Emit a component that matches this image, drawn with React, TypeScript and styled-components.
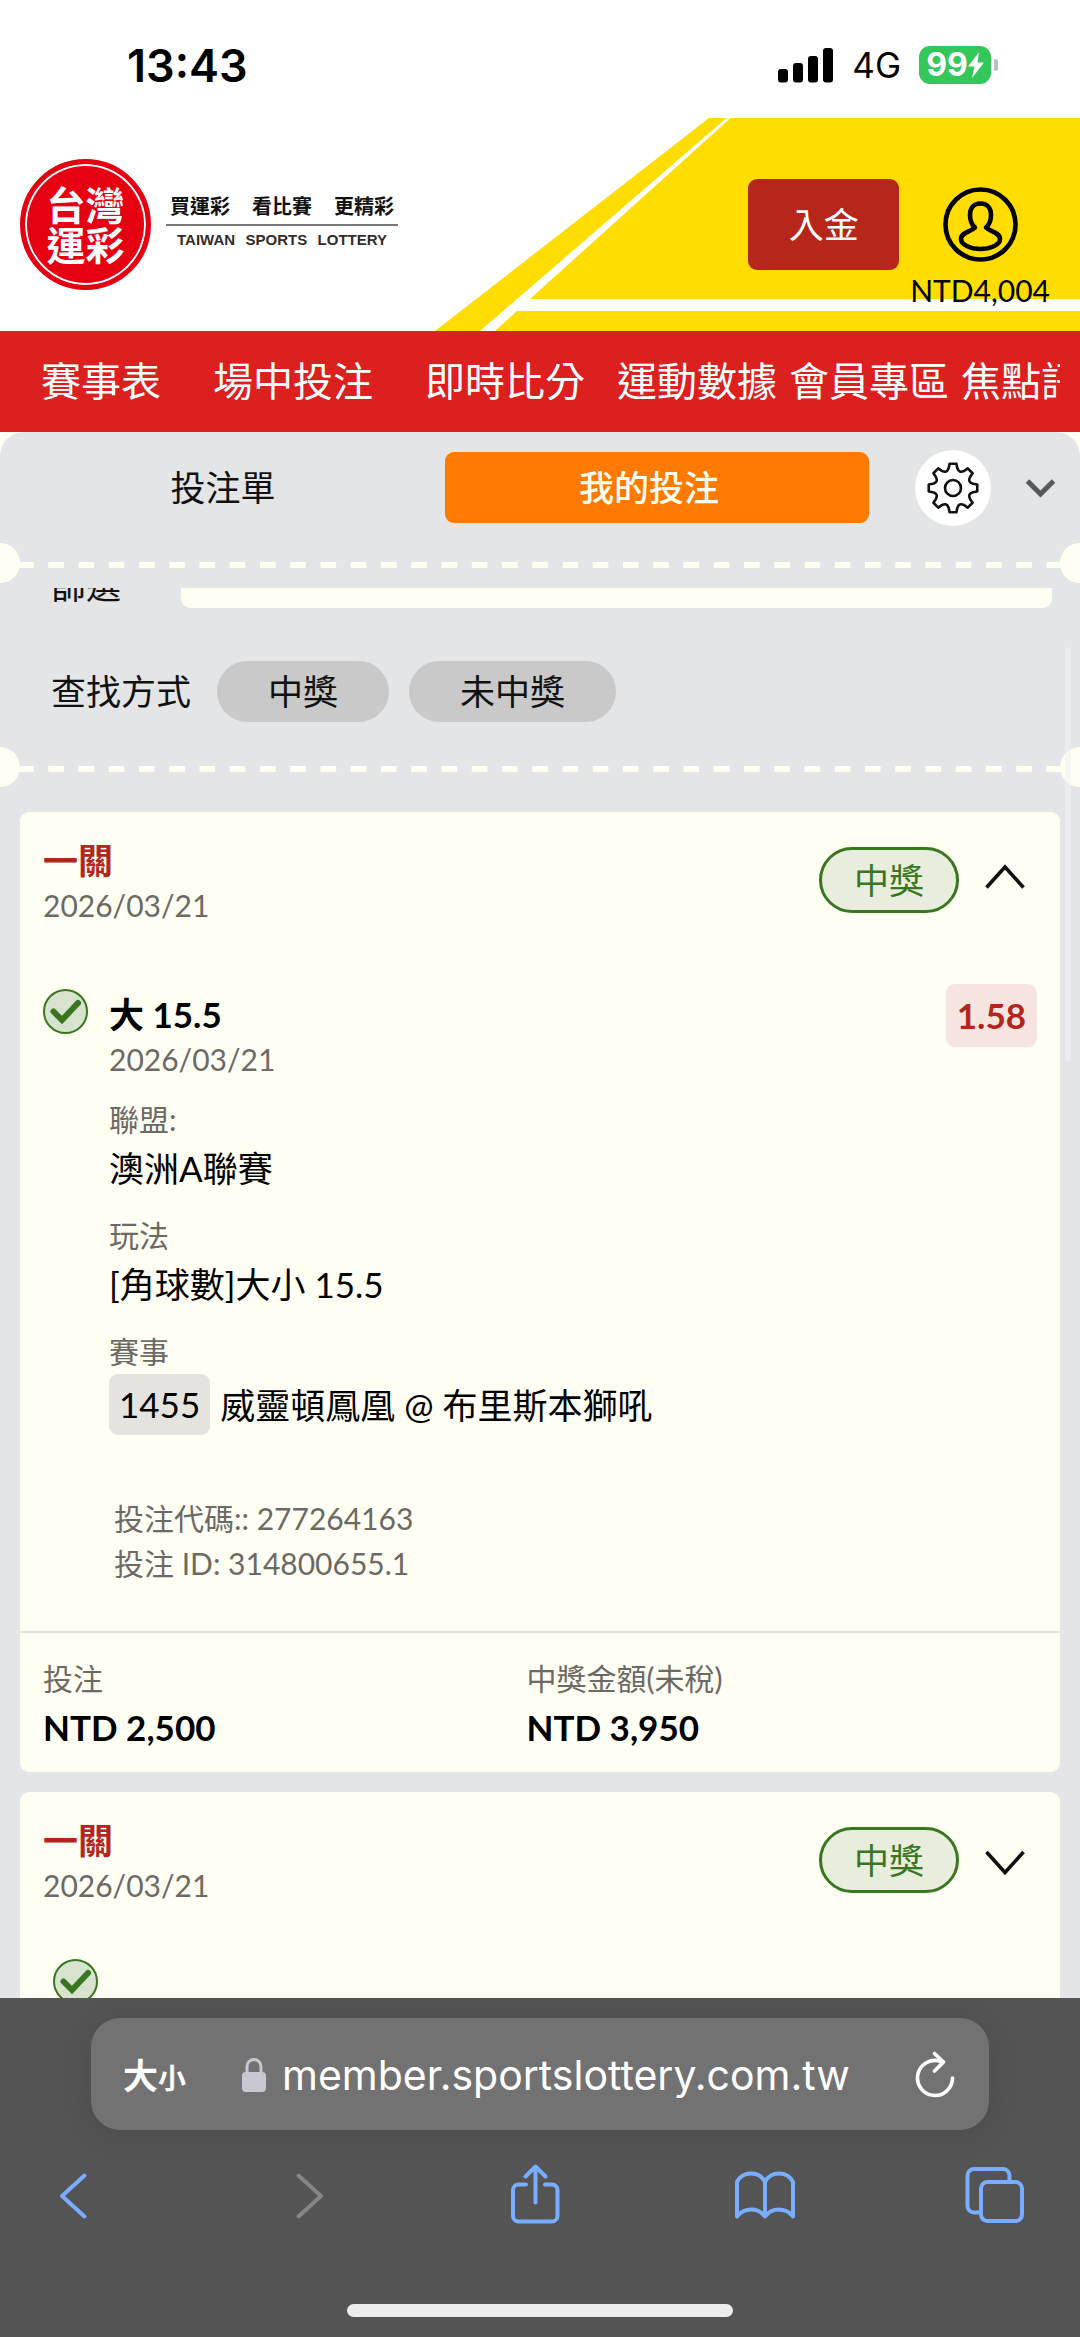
import React from "react";
import styled, { createGlobalStyle } from "styled-components";

const cream = "#fffef3";
const panel = "#e4e5e7";
const muted = "#6c6a65";
const red = "#b3261c";
const green = "#38771f";

const GlobalStyle = createGlobalStyle`
  *, *::before, *::after { box-sizing: border-box; }
  body { margin: 0; background: ${cream}; }
  button, input, select { font: inherit; color: inherit; margin: 0; padding: 0; border: 0; background: none; border-radius: 0; }
  h1, h2, p, dl, dd, dt, ul { margin: 0; padding: 0; font: inherit; list-style: none; }
  a { color: inherit; text-decoration: none; }
  svg { display: block; flex: none; }
`;

const Shell = styled.div`
  display: flex;
  flex-direction: column;
  height: 100vh;
  overflow: hidden;
  background: ${cream};
  color: #111;
  font-family: Lato, "Noto Sans CJK TC", sans-serif;
  font-size: 35px;
  line-height: 45px;
`;

/* ---------- status bar ---------- */
const StatusBar = styled.div`
  display: flex;
  align-items: center;
  justify-content: space-between;
  height: 118px;
  padding: 12px 82px 0 127px;
  flex: none;
  background: #fff;
  color: #000;
  font-family: Inter, sans-serif;
`;
const Clock = styled.time`
  font-size: 45px;
  font-weight: 600;
`;
const StatusRight = styled.div`
  display: flex;
  align-items: center;
`;
const Network = styled.span`
  margin: 0 18px;
  font-size: 35px;
  line-height: 38px;
`;
const Battery = styled.span`
  display: flex;
  align-items: center;
  justify-content: center;
  width: 72px;
  height: 38px;
  border-radius: 11px;
  background: #34c759;
  color: #fff;
  font-size: 32px;
  font-weight: 700;
  line-height: 38px;
`;

/* ---------- brand header ---------- */
const Header = styled.header`
  position: relative;
  display: flex;
  align-items: flex-start;
  justify-content: space-between;
  height: 213px;
  padding: 41px 30px 0 20px;
  flex: none;
  overflow: hidden;
  background: #fff;
`;
const Stripes = styled.svg`
  position: absolute;
  top: 0;
  right: 0;
`;
const Brand = styled.a`
  position: relative;
  display: flex;
  align-items: center;
  gap: 15px;
`;
const Seal = styled.h1`
  display: grid;
  place-content: center;
  width: 131px;
  height: 131px;
  border-radius: 50%;
  border: 5px solid #e50012;
  background: #e50012;
  box-shadow: inset 0 0 0 2px #fff;
  color: #fff;
  font-size: 39px;
  font-weight: 700;
  line-height: 40px;
  text-align: center;
`;
const Slogan = styled.div`
  width: 232px;
  padding-bottom: 8px;
  color: #111;
`;
const SloganRow = styled.p`
  display: flex;
  justify-content: space-between;
  padding: 0 4px 4px 4px;
  border-bottom: 2px solid #777;
  font-size: 20px;
  font-weight: 700;
  line-height: 28px;
`;
const SloganLatin = styled.p`
  display: flex;
  justify-content: space-between;
  padding: 4px 11px 0;
  color: #332c2b;
  font-family: "Liberation Sans", Arial, sans-serif;
  font-size: 15px;
  font-weight: 700;
  line-height: 20px;
`;
const Account = styled.div`
  position: relative;
  display: flex;
  align-items: flex-start;
`;
const Deposit = styled.button`
  width: 151px;
  height: 91px;
  margin-top: 20px;
  border-radius: 9px;
  background: #b7261b;
  color: #fff;
  font-size: 35px;
`;
const Profile = styled.button`
  display: flex;
  flex-direction: column;
  align-items: center;
  gap: 6px;
  margin-left: 11px;
  padding-top: 28px;
  color: #000;
  font-size: 30px;
  line-height: 45px;
`;

/* ---------- navigation ---------- */
const Nav = styled.nav`
  display: flex;
  height: 101px;
  padding: 0 20px 0 15px;
  flex: none;
  background: #dc1f1f;
`;
const NavList = styled.ul`
  display: flex;
  align-items: center;
  flex: 1;
  min-width: 0;
  overflow: hidden;
`;
const NavItem = styled.li<{ $wide?: boolean }>`
  padding: 0 ${(p) => (p.$wide ? 26 : 6)}px;
  color: #fff;
  font-size: 40px;
  white-space: nowrap;
`;

/* ---------- betting panel ---------- */
const Panel = styled.main`
  position: relative;
  display: flex;
  flex-direction: column;
  flex: 1;
  min-height: 0;
  border-radius: 24px 24px 0 0;
  background: ${panel};
`;
const PanelHead = styled.div`
  display: flex;
  align-items: center;
  height: 111px;
  padding: 0 24px 0 11px;
  flex: none;
`;
const Tabs = styled.div`
  display: grid;
  grid-template-columns: 1fr 1fr;
  gap: 10px;
  flex: 1;
`;
const Tab = styled.button<{ $active?: boolean }>`
  height: 71px;
  padding-right: ${(p) => (p.$active ? 16 : 0)}px;
  border-radius: 9px;
  background: ${(p) => (p.$active ? "#ff7a00" : "transparent")};
  color: ${(p) => (p.$active ? cream : "#111")};
  font-weight: ${(p) => (p.$active ? 500 : 400)};
`;
const RoundButton = styled.button`
  display: grid;
  place-items: center;
  width: 76px;
  height: 76px;
  margin: 0 34px 0 46px;
  border-radius: 50%;
  background: #fff;
`;
const IconButton = styled.button`
  display: grid;
  place-items: center;
`;
const Perforation = styled.div`
  display: flex;
  align-items: center;
  justify-content: space-between;
  height: 40px;
  flex: none;
  &::before, &::after {
    content: "";
    width: 20px;
    height: 40px;
    background: ${cream};
  }
  &::before { border-radius: 0 20px 20px 0; }
  &::after { border-radius: 20px 0 0 20px; }
`;
const Dashes = styled.span`
  flex: 1;
  height: 6px;
  margin: 4px -17px 0 -2px;
  background: linear-gradient(to right, ${cream} 50%, transparent 50%) 0 0 / 30px 6px round;
`;
const Viewport = styled.div`
  flex: 1;
  min-height: 0;
  margin-top: 5px;
  overflow: hidden;
`;
const ScrollThumb = styled.div`
  position: absolute;
  top: 215px;
  right: 9px;
  width: 6px;
  height: 415px;
  border-radius: 3px;
  background: rgba(240, 240, 246, 0.6);
`;
const FilterRow = styled.div`
  display: flex;
  align-items: center;
  height: 46px;
  margin-top: -26px;
  padding: 0 28px 0 51px;
`;
const FilterLabel = styled.label`
  width: 130px;
`;
const FilterSelect = styled.select`
  appearance: none;
  flex: 1;
  height: 46px;
  border-radius: 9px;
  background: ${cream};
`;
const SearchRow = styled.div`
  display: flex;
  align-items: center;
  gap: 20px;
  margin: 53px 0 25px;
  padding: 0 51px;
`;
const SearchLabel = styled.span`
  margin-right: 6px;
`;
const Pill = styled.button`
  height: 61px;
  padding: 0 51px;
  border-radius: 31px;
  background: #c9c9c9;
`;

/* ---------- bet cards ---------- */
const CardList = styled.div`
  display: flex;
  flex-direction: column;
  gap: 20px;
  padding: 25px 20px 0;
`;
const Card = styled.article`
  border-radius: 9px;
  background: ${cream};
`;
const CardHead = styled.div`
  display: flex;
  align-items: flex-start;
  justify-content: space-between;
  padding: 26px 35px 0 23px;
`;
const CardTitle = styled.h2`
  color: ${red};
  font-weight: 700;
`;
const Small = styled.p`
  color: ${muted};
  font-size: 30px;
`;
const CardActions = styled.div`
  display: flex;
  align-items: center;
  gap: 26px;
  padding-top: 9px;
`;
const Won = styled.span`
  height: 66px;
  padding: 0 32px;
  border: 3px solid ${green};
  border-radius: 33px;
  background: #e9eddd;
  color: ${green};
  line-height: 60px;
`;
const CardBody = styled.div`
  display: flex;
  align-items: flex-start;
  gap: 21px;
  padding: 56px 23px 45px;
`;
const CheckSlot = styled.div`
  padding-top: 5px;
`;
const Details = styled.div`
  flex: 1;
  padding-top: 8px;
`;
const Pick = styled.p`
  color: #000;
  font-weight: 700;
`;
const Fields = styled.dl`
  display: flex;
  flex-direction: column;
  gap: 19px;
  padding-top: 15px;
`;
const FieldLabel = styled.dt`
  color: ${muted};
  font-size: 30px;
`;
const FieldValue = styled.dd<{ $bold?: boolean }>`
  display: flex;
  align-items: center;
  gap: 10px;
  color: #000;
  font-weight: ${(p) => (p.$bold ? 700 : 400)};
  line-height: 52px;
`;
const MatchNo = styled.span`
  height: 61px;
  padding: 0 10px;
  border-radius: 9px;
  background: #e5e3de;
  line-height: 61px;
`;
const Codes = styled.div`
  padding: 61px 0 0 5px;
`;
const Odds = styled.span`
  height: 63px;
  padding: 0 11px;
  border-radius: 9px;
  background: #f6e5df;
  color: ${red};
  font-weight: 700;
  line-height: 63px;
`;
const Totals = styled.dl`
  display: grid;
  grid-template-columns: 1fr 1fr;
  padding: 23px 50px 19px 23px;
  border-top: 2px solid #e4e2da;
`;
const CollapsedBody = styled.div`
  padding: 51px 33px 45px;
`;

/* ---------- browser chrome ---------- */
const Browser = styled.footer`
  display: flex;
  flex-direction: column;
  align-items: center;
  height: 339px;
  padding: 20px 43px;
  flex: none;
  background: #545454;
`;
const AddressBar = styled.div`
  display: flex;
  align-items: center;
  align-self: stretch;
  height: 115px;
  margin: 0 48px;
  padding: 2px 34px 0 32px;
  border-radius: 29px;
  background: #727272;
  box-shadow: 0 4px 32px rgba(0, 0, 0, 0.1);
  color: #fff;
`;
const TextSize = styled.button`
  display: flex;
  align-items: baseline;
  margin-right: 56px;
  font-family: "Noto Sans CJK TC", sans-serif;
  font-weight: 700;
`;
const SmallGlyph = styled.span`
  font-size: 28px;
`;
const Address = styled.input`
  flex: 1;
  min-width: 0;
  margin-left: 16px;
  font-family: Inter, sans-serif;
  font-size: 41px;
  outline: none;
`;
const Toolbar = styled.div`
  display: flex;
  justify-content: space-between;
  align-self: stretch;
  margin-top: 32px;
  padding-right: 12px;
  color: #78adff;
`;
const HomeIndicator = styled.div`
  width: 386px;
  height: 13px;
  margin-top: 74px;
  border-radius: 7px;
  background: #ededed;
`;

/* ---------- drawings ---------- */
const polar = (r: number, deg: number) => {
  const a = (deg * Math.PI) / 180;
  return `${(26 + r * Math.sin(a)).toFixed(2)} ${(26 - r * Math.cos(a)).toFixed(2)}`;
};
const gearPath =
  Array.from({ length: 8 }, (_, i) => {
    const t = i * 45;
    return `${i ? "L" : "M"}${polar(24.5, t - 8)}L${polar(24.5, t + 8)}L${polar(20.5, t + 12)}Q${polar(15.5, t + 22.5)} ${polar(20.5, t + 33)}`;
  }).join("") + "Z";

const Gear = () => (
  <svg width="52" height="52" viewBox="0 0 52 52" fill="none" stroke="#111" strokeWidth="2.6" strokeLinejoin="round">
    <path d={gearPath} />
    <circle cx="26" cy="26" r="8" />
  </svg>
);

const Check = () => (
  <svg width="45" height="45" viewBox="0 0 45 45" fill="none" role="img" aria-label="中獎">
    <circle cx="22.5" cy="22.5" r="21.5" fill="#d8e3cf" stroke={green} strokeWidth="2" />
    <path d="M10.500 22.500l8.500 8.500 16-17" stroke={green} strokeWidth="6" strokeLinecap="round" />
  </svg>
);

const Chevron = ({ up }: { up?: boolean }) => (
  <svg width="40" height="34" viewBox="0 0 40 34" fill="none" stroke="#111" strokeWidth="3.600">
    <path d={up ? "M1.500 24.500L20 4l18.500 20.500" : "M1.500 9L20 29.500 38.500 9"} />
  </svg>
);

const ToolIcon = ({ children, dim }: { children: React.ReactNode; dim?: boolean }) => (
  <svg width="60" height="68" viewBox="0 0 60 68" fill="none" stroke={dim ? "#858585" : "currentColor"} strokeWidth="4" strokeLinecap="round" strokeLinejoin="round">
    {children}
  </svg>
);

type CardTopProps = { title: string; date: string; open?: boolean };
const CardTop = ({ title, date, open }: CardTopProps) => (
  <CardHead>
    <div>
      <CardTitle>{title}</CardTitle>
      <Small>{date}</Small>
    </div>
    <CardActions>
      <Won>中獎</Won>
      <IconButton aria-expanded={!!open} aria-label="明細">
        <Chevron up={open} />
      </IconButton>
    </CardActions>
  </CardHead>
);

const navItems = [
  { text: "賽事表", wide: true },
  { text: "場中投注", wide: true },
  { text: "即時比分", wide: true },
  { text: "運動數據" },
  { text: "會員專區" },
  { text: "焦點訊息" },
];

export default function App() {
  return (
    <Shell>
      <GlobalStyle />
      <StatusBar>
        <Clock>13:43</Clock>
        <StatusRight>
          <svg width="56" height="35" viewBox="0 0 56 35">
            <rect x="0" y="21" width="10" height="13.500" rx="3" />
            <rect x="15" y="15" width="10" height="19.500" rx="3" />
            <rect x="30" y="8" width="10" height="26.500" rx="3" />
            <rect x="45" y="0" width="10" height="34.500" rx="3" />
          </svg>
          <Network>4G</Network>
          <Battery>
            99
            <svg width="16" height="26" viewBox="0 0 16 26" fill="#fff">
              <path d="M11 0L0 14.500h6.500L4 26 16 10.500H9.500z" />
            </svg>
          </Battery>
          <svg width="7" height="12" viewBox="0 0 7 12" fill="#bdbdbd">
            <path d="M3 0a6 6 0 0 1 0 12z" />
          </svg>
        </StatusRight>
      </StatusBar>

      <Header>
        <Stripes width="645" height="213" viewBox="435 118 645 213" aria-hidden="true">
          <path d="M709 118H1080V331H435z" fill="#ffdd00" />
          <path d="M726.500 118H730.500L530 299H1080V311H517L495 331H480z" fill="#fff" />
        </Stripes>
        <Brand href="#">
          <Seal>
            <span>台灣</span>
            <span>運彩</span>
          </Seal>
          <Slogan>
            <SloganRow>
              <span>買運彩</span>
              <span>看比賽</span>
              <span>更精彩</span>
            </SloganRow>
            <SloganLatin>
              <span>TAIWAN</span>
              <span>SPORTS</span>
              <span>LOTTERY</span>
            </SloganLatin>
          </Slogan>
        </Brand>
        <Account>
          <Deposit>入金</Deposit>
          <Profile>
            <svg width="75" height="75" viewBox="0 0 75 75" fill="none" stroke="#000" strokeWidth="4.600" strokeLinejoin="round">
              <circle cx="37.500" cy="37.500" r="35" />
              <path d="M37.500 16.500c-7 0-10.500 5-10.500 11.500 0 6.500 2 10 5 12.500-3.500 4-14 4.500-14 11.500 0 6 10 10 19.500 10S57 58 57 52c0-7-10.500-7.500-14-11.500 3-2.500 5-6 5-12.500 0-6.500-3.500-11.500-10.500-11.500z" />
            </svg>
            NTD4,004
          </Profile>
        </Account>
      </Header>

      <Nav>
        <NavList>
          {navItems.map((n) => (
            <NavItem key={n.text} $wide={n.wide}>
              <a href="#">{n.text}</a>
            </NavItem>
          ))}
        </NavList>
      </Nav>

      <Panel>
        <PanelHead>
          <Tabs>
            <Tab>投注單</Tab>
            <Tab $active>我的投注</Tab>
          </Tabs>
          <RoundButton aria-label="設定">
            <Gear />
          </RoundButton>
          <IconButton aria-label="收合">
            <svg width="31" height="20" viewBox="0 0 31 20" fill="none" stroke="#58595b" strokeWidth="5">
              <path d="M2.500 3L15.500 16 28.500 3" />
            </svg>
          </IconButton>
        </PanelHead>
        <Perforation>
          <Dashes />
        </Perforation>
        <Viewport>
          <FilterRow>
            <FilterLabel htmlFor="filter">篩選</FilterLabel>
            <FilterSelect id="filter" />
          </FilterRow>
          <SearchRow>
            <SearchLabel>查找方式</SearchLabel>
            <Pill>中獎</Pill>
            <Pill>未中獎</Pill>
          </SearchRow>
          <Perforation>
            <Dashes />
          </Perforation>
          <CardList>
            <Card>
              <CardTop title="一關" date="2026/03/21" open />
              <CardBody>
                <CheckSlot>
                  <Check />
                </CheckSlot>
                <Details>
                  <Pick>大 15.5</Pick>
                  <Small>2026/03/21</Small>
                  <Fields>
                    <div>
                      <FieldLabel>聯盟:</FieldLabel>
                      <FieldValue>澳洲A聯賽</FieldValue>
                    </div>
                    <div>
                      <FieldLabel>玩法</FieldLabel>
                      <FieldValue>[角球數]大小 15.5</FieldValue>
                    </div>
                    <div>
                      <FieldLabel>賽事</FieldLabel>
                      <FieldValue>
                        <MatchNo>1455</MatchNo>
                        <span>威靈頓鳳凰 @ 布里斯本獅吼</span>
                      </FieldValue>
                    </div>
                  </Fields>
                  <Codes>
                    <Small>投注代碼:: 277264163</Small>
                    <Small>投注 ID: 314800655.1</Small>
                  </Codes>
                </Details>
                <Odds>1.58</Odds>
              </CardBody>
              <Totals>
                <div>
                  <FieldLabel>投注</FieldLabel>
                  <FieldValue $bold>NTD 2,500</FieldValue>
                </div>
                <div>
                  <FieldLabel>中獎金額(未稅)</FieldLabel>
                  <FieldValue $bold>NTD 3,950</FieldValue>
                </div>
              </Totals>
            </Card>
            <Card>
              <CardTop title="一關" date="2026/03/21" />
              <CollapsedBody>
                <Check />
              </CollapsedBody>
            </Card>
          </CardList>
        </Viewport>
        <ScrollThumb />
      </Panel>

      <Browser>
        <AddressBar>
          <TextSize>
            大<SmallGlyph>小</SmallGlyph>
          </TextSize>
          <svg width="24" height="34" viewBox="0 0 24 34" fill="none">
            <path d="M5 16V8.500a7 7 0 0 1 14 0V16" stroke="#c9c7d0" strokeWidth="3" />
            <rect x="0" y="14" width="24" height="20" rx="4" fill="#c9c7d0" />
          </svg>
          <Address aria-label="網址" readOnly value="member.sportslottery.com.tw" />
          <IconButton aria-label="重新載入">
            <svg width="40" height="48" viewBox="0 0 40 48" fill="none" stroke="#fff" strokeWidth="3.600" strokeLinecap="round" strokeLinejoin="round">
              <path d="M26 10.500A17.500 17.500 0 1 0 37.500 27" />
              <path d="M19.500 2.500l9 8.500-9 9" />
            </svg>
          </IconButton>
        </AddressBar>
        <Toolbar>
          <IconButton aria-label="上一頁">
            <ToolIcon>
              <path d="M41.500 13.500L19 34l22.500 20.500" />
            </ToolIcon>
          </IconButton>
          <IconButton aria-label="下一頁">
            <ToolIcon dim>
              <path d="M24.500 13.500L47 34 24.500 54.500" />
            </ToolIcon>
          </IconButton>
          <IconButton aria-label="分享">
            <ToolIcon>
              <path d="M22 22.500H14.500a5.500 5.500 0 0 0-5.500 5.500V54a5.500 5.500 0 0 0 5.500 5.500H48a5.500 5.500 0 0 0 5.500-5.500V28a5.500 5.500 0 0 0-5.500-5.500H41" />
              <path d="M31.500 40.500V5.500M21.500 14.500l10-10 10 10" />
            </ToolIcon>
          </IconButton>
          <IconButton aria-label="書籤">
            <ToolIcon>
              <path d="M30 20v34.500C27 50.500 23 47.500 16.500 47.500S5 50.500 2 54.500V20c2.500-5 7.500-8.500 14-8.500S27.500 15 30 20zM30 20v34.500c3-4 7-7 13.500-7S55 50.500 58 54.500V20c-2.500-5-7.500-8.500-14-8.500S32.500 15 30 20z" />
            </ToolIcon>
          </IconButton>
          <IconButton aria-label="分頁">
            <ToolIcon>
              <path d="M15 50.500H9a6.500 6.500 0 0 1-6.500-6.500V13.500A6.500 6.500 0 0 1 9 7h29a6.500 6.500 0 0 1 6.500 6.500V20" />
              <rect x="16" y="20" width="41" height="39" rx="6.500" />
            </ToolIcon>
          </IconButton>
        </Toolbar>
        <HomeIndicator />
      </Browser>
    </Shell>
  );
}
